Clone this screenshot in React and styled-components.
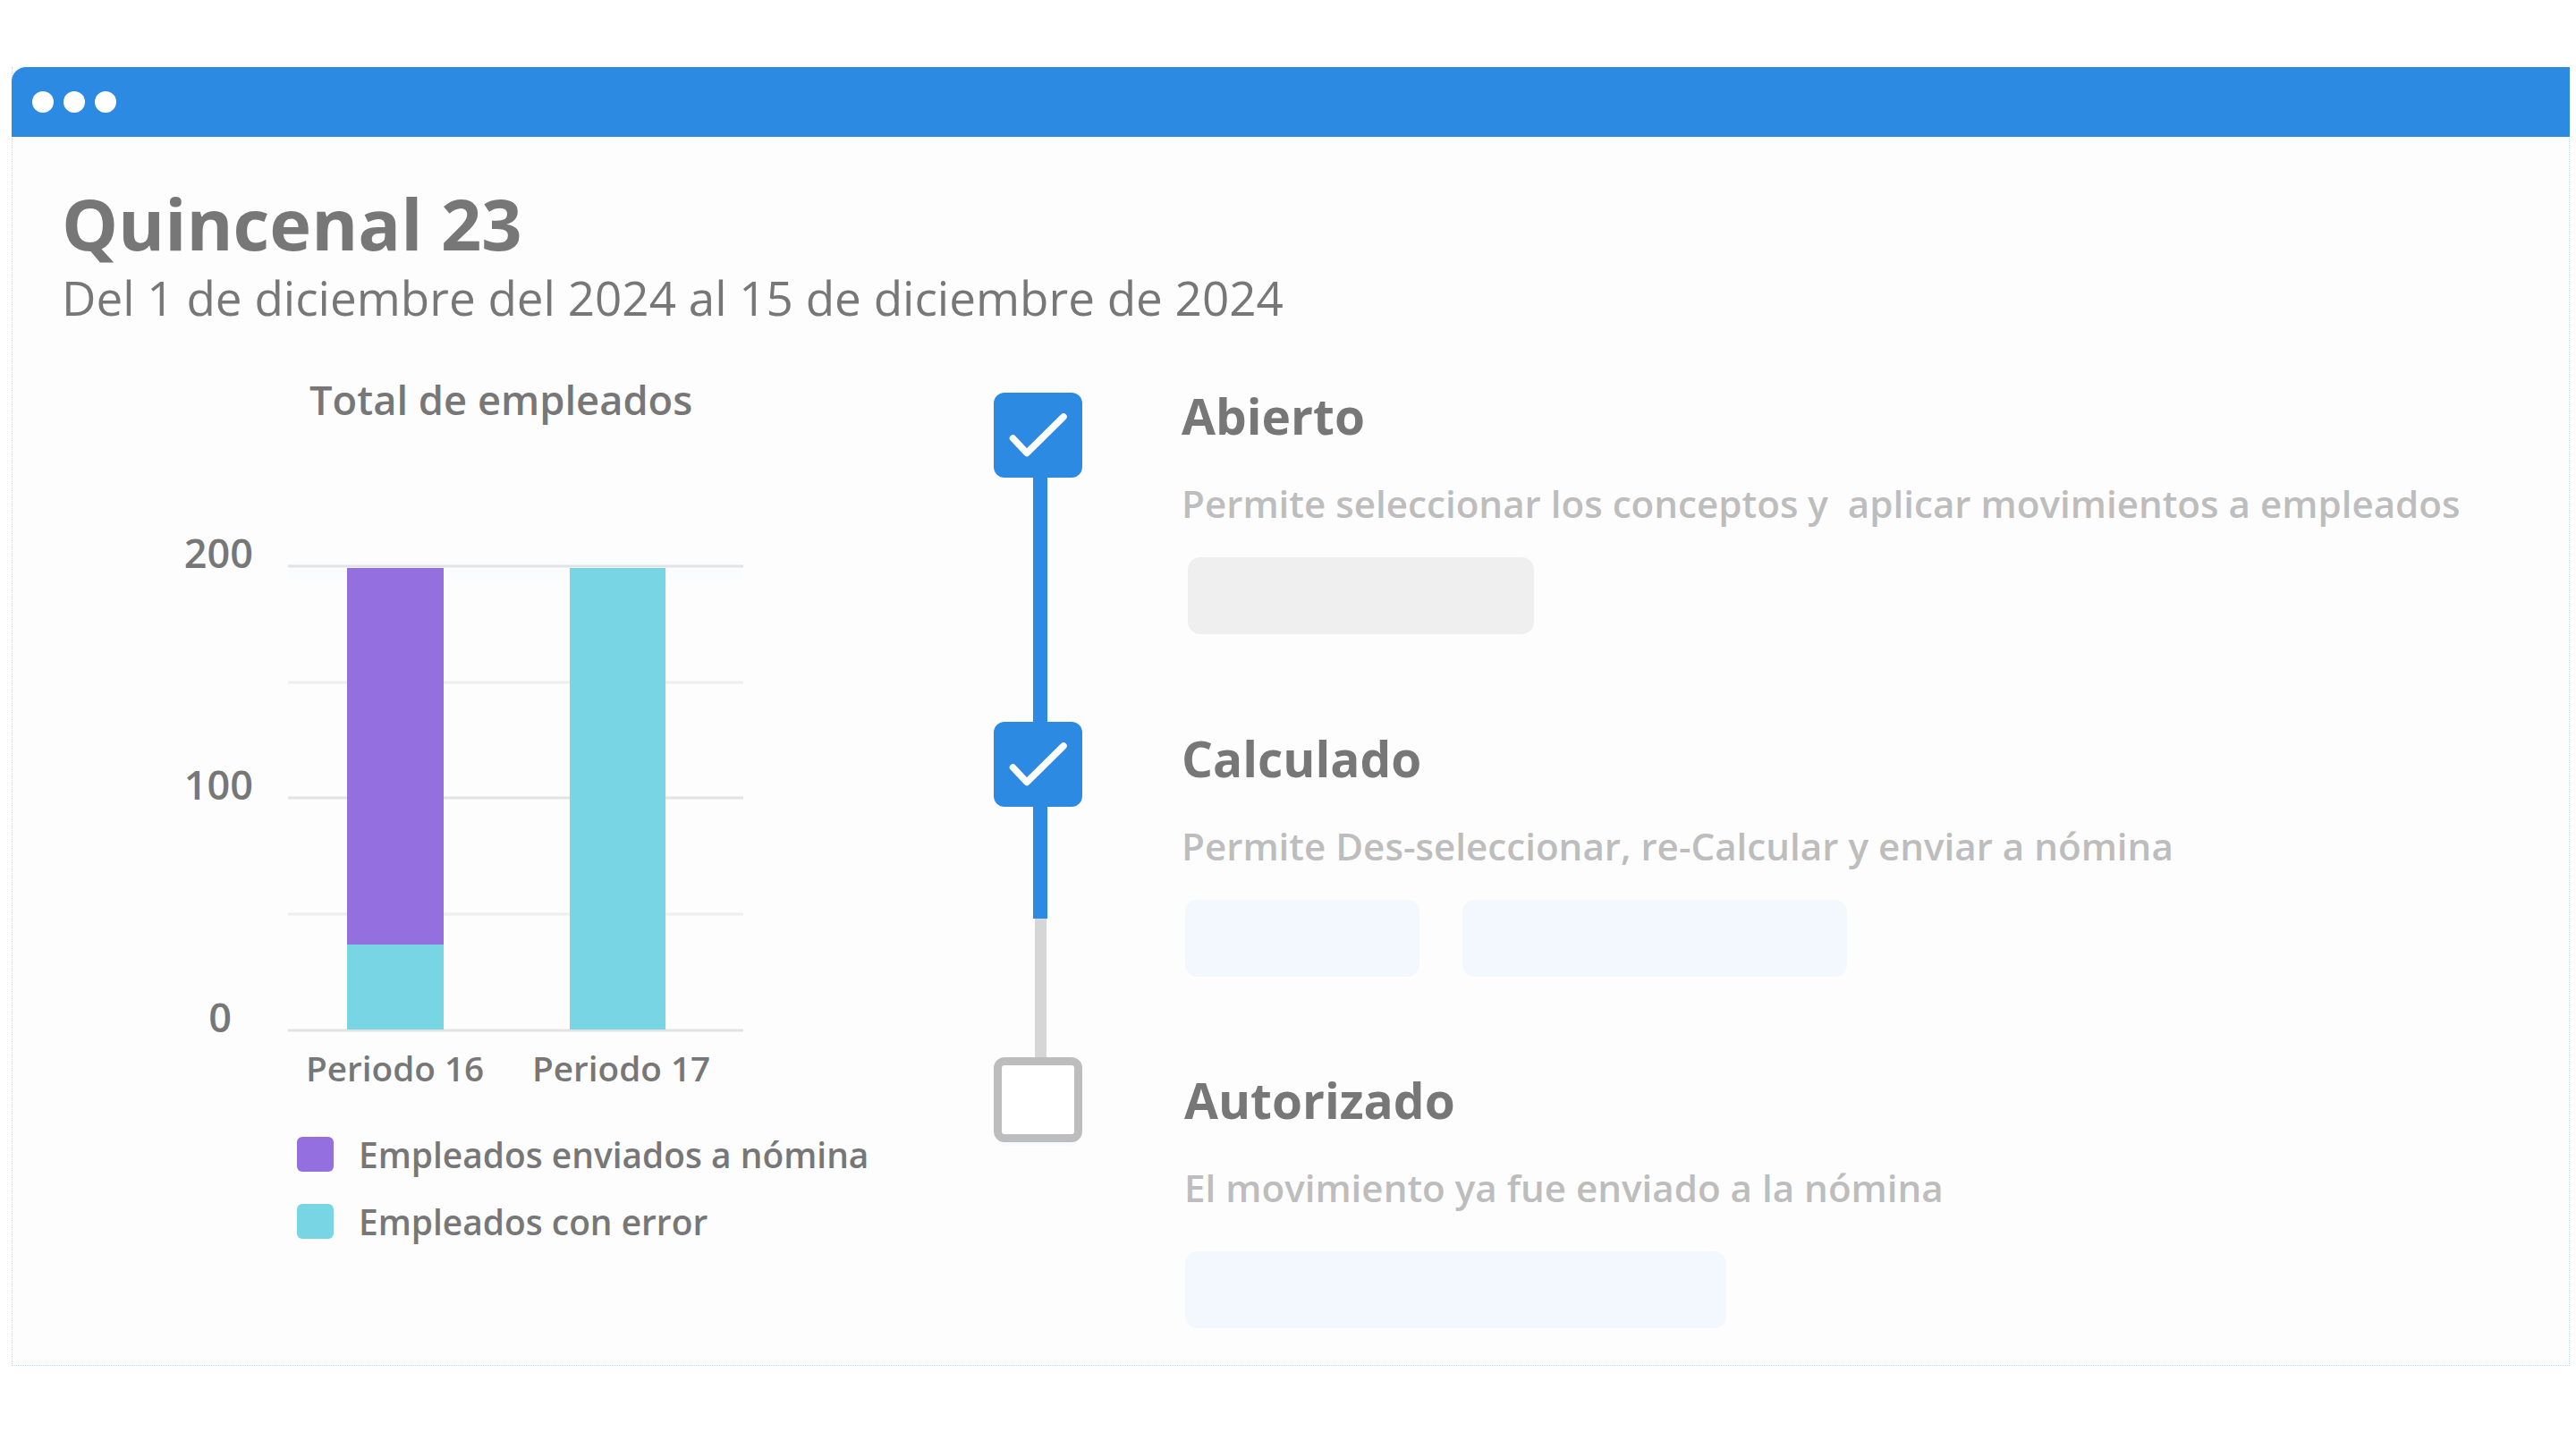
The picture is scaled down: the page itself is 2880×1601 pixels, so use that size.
import React from 'react'
import styled, { createGlobalStyle } from 'styled-components'

const Global = createGlobalStyle`
    html, body {
        margin: 0;
        padding: 0;
        background: #ffffff;
        font-family: "Open Sans", "Noto Sans", sans-serif;
    }
`
const Page = styled.div`
    width: 2880px;
    height: 1601px;
    padding: 75px 7px 0 13px;
    box-sizing: border-box;
`
const Window = styled.div`
    height: 1452px;
    background: #fdfdfd;
    border-left: 1px dotted #c4def7;
    border-bottom: 1px dotted #c4def7;
    border-right: 1px dotted #c4def7;
    box-sizing: border-box;
`
const TitleBar = styled.div`
    height: 78px;
    margin: 0 -1px;
    background: #2d8ae3;
    border-top-left-radius: 16px;
    display: flex;
    align-items: center;
    gap: 11px;
    padding-left: 23px;
`
const Dot = styled.span`
    width: 24px;
    height: 24px;
    border-radius: 50%;
    background: #ffffff;
`
const Content = styled.div`
    padding: 52px 0 0 55px;
`
const Title = styled.h1`
    margin: 0;
    font-size: 79.3px;
    line-height: 88px;
    font-weight: 700;
    color: #777777;
`
const Subtitle = styled.p`
    margin: 4px 0 0;
    font-size: 53px;
    line-height: 72px;
    font-weight: 400;
    color: #777777;
`
const Columns = styled.div`
    display: flex;
    margin-top: 46px;
`
const ChartColumn = styled.section`
    width: 1042px;
    flex: none;
`
const ChartTitle = styled.h2`
    margin: 2px 0 114px 277px;
    font-size: 45.3px;
    line-height: 60px;
    font-weight: 600;
    color: #777777;
`
const Plot = styled.svg`
    display: block;
    margin-left: 121px;
`
const AxisText = styled.text`
    font-family: "Open Sans", sans-serif;
    font-size: ${(p) => p.$size}px;
    font-weight: 600;
    fill: #777777;
`
const Legend = styled.ul`
    list-style: none;
    margin: 45px 0 0 263px;
    padding: 0;
    display: flex;
    flex-direction: column;
    gap: 36px;
`
const LegendItem = styled.li`
    display: flex;
    align-items: center;
    gap: 28px;
    height: 39px;
    font-size: 38.9px;
    font-weight: 600;
    color: #777777;
`
const Swatch = styled.span`
    width: 41px;
    height: 39px;
    border-radius: 6px;
    background: ${(p) => p.$color};
`
const Rail = styled.div`
    width: 99px;
    flex: none;
    margin-top: 24px;
    display: flex;
    flex-direction: column;
    align-items: center;
`
const StepBox = styled.div`
    width: 99px;
    height: 95px;
    box-sizing: border-box;
    border-radius: 12px;
    background: ${(p) => (p.$done ? '#2d8ae3' : '#ffffff')};
    border: ${(p) => (p.$done ? 'none' : '9px solid #bdbdbd')};
    box-shadow: ${(p) => (p.$done ? 'none' : '0 9px 0 -5px #f8fafe')};
`
const Connector = styled.div`
    width: ${(p) => (p.$done ? 16 : 13)}px;
    height: ${(p) => p.$length}px;
    margin-left: 5px;
    background: ${(p) => (p.$done ? '#2d8ae3' : '#d6d6d6')};
`
const Steps = styled.div`
    flex: none;
    margin: 1px 0 0 111px;
`
const Step = styled.article`
    height: ${(p) => p.$height}px;
    padding-top: ${(p) => p.$top}px;
    box-sizing: border-box;
`
const StepName = styled.h3`
    margin: 0 0 0 ${(p) => p.$indent}px;
    font-size: 55px;
    line-height: 76px;
    font-weight: 700;
    color: #777777;
`
const StepText = styled.p`
    margin: 31px 0 0 ${(p) => p.$indent}px;
    font-size: 42.15px;
    line-height: 58px;
    font-weight: 600;
    color: #bdbdbd;
    white-space: pre;
`
const Actions = styled.div`
    display: flex;
    gap: 48px;
    margin: ${(p) => p.$top}px 0 0 ${(p) => p.$indent}px;
`
const Placeholder = styled.div`
    width: ${(p) => p.$width}px;
    height: 86px;
    border-radius: 14px;
    background: ${(p) => (p.$muted ? '#efefef' : '#f3f7fe')};
`

const Check = () => (
    <svg width="99" height="95" viewBox="0 0 99 95" fill="none">
        <path d="M21.5 51 L37 67.5 L78 27" stroke="#ffffff" strokeWidth="7.5" strokeLinecap="round" strokeLinejoin="round" />
    </svg>
)

const gridLines = [
    { y: 42, color: '#e3e3e3' },
    { y: 172, color: '#eeeeee' },
    { y: 301, color: '#e3e3e3' },
    { y: 431, color: '#eeeeee' },
    { y: 561, color: '#e3e3e3' },
]

const App = () => {
    return (
        <Page>
            <Global />
            <Window>
                <TitleBar>
                    <Dot />
                    <Dot />
                    <Dot />
                </TitleBar>
                <Content>
                    <Title>Quincenal 23</Title>
                    <Subtitle>Del 1 de diciembre del 2024 al 15 de diciembre de 2024</Subtitle>
                    <Columns>
                        <ChartColumn>
                            <ChartTitle>Total de empleados</ChartTitle>
                            <Plot width="660" height="635" viewBox="0 0 660 635">
                                <rect x="132" y="36" width="509" height="22" rx="10" fill="#fafcfe" />
                                {gridLines.map((line) => (
                                    <rect key={line.y} x="132" y={line.y - 1.5} width="509" height="3" fill={line.color} />
                                ))}
                                <rect x="198" y="44" width="108" height="421" fill="#946fdf" />
                                <rect x="198" y="465" width="108" height="95" fill="#78d5e3" />
                                <rect x="447" y="44" width="107" height="516" fill="#78d5e3" />
                                <AxisText $size={45} x="93" y="44" textAnchor="end">200</AxisText>
                                <AxisText $size={45} x="93" y="303" textAnchor="end">100</AxisText>
                                <AxisText $size={45} x="69" y="563" textAnchor="end">0</AxisText>
                                <AxisText $size={38.7} x="152" y="618">Periodo 16</AxisText>
                                <AxisText $size={38.7} x="405" y="618">Periodo 17</AxisText>
                            </Plot>
                            <Legend>
                                <LegendItem>
                                    <Swatch $color="#946fdf" />
                                    Empleados enviados a nómina
                                </LegendItem>
                                <LegendItem>
                                    <Swatch $color="#78d5e3" />
                                    Empleados con error
                                </LegendItem>
                            </Legend>
                        </ChartColumn>
                        <Rail>
                            <StepBox $done><Check /></StepBox>
                            <Connector $done $length={273} />
                            <StepBox $done><Check /></StepBox>
                            <Connector $done $length={125} />
                            <Connector $length={155} />
                            <StepBox />
                        </Rail>
                        <Steps>
                            <Step $height={394} $top={11}>
                                <StepName $indent={0}>Abierto</StepName>
                                <StepText $indent={0}>Permite seleccionar los conceptos y  aplicar movimientos a empleados</StepText>
                                <Actions $top={31} $indent={7}>
                                    <Placeholder $width={387} $muted />
                                </Actions>
                            </Step>
                            <Step $height={382} $top={0}>
                                <StepName $indent={0}>Calculado</StepName>
                                <StepText $indent={0}>Permite Des-seleccionar, re-Calcular y enviar a nómina</StepText>
                                <Actions $top={31} $indent={4}>
                                    <Placeholder $width={262} />
                                    <Placeholder $width={430} />
                                </Actions>
                            </Step>
                            <Step $height={300} $top={0}>
                                <StepName $indent={3}>Autorizado</StepName>
                                <StepText $indent={3}>El movimiento ya fue enviado a la nómina</StepText>
                                <Actions $top={42} $indent={4}>
                                    <Placeholder $width={605} />
                                </Actions>
                            </Step>
                        </Steps>
                    </Columns>
                </Content>
            </Window>
        </Page>
    )
}

export default App
